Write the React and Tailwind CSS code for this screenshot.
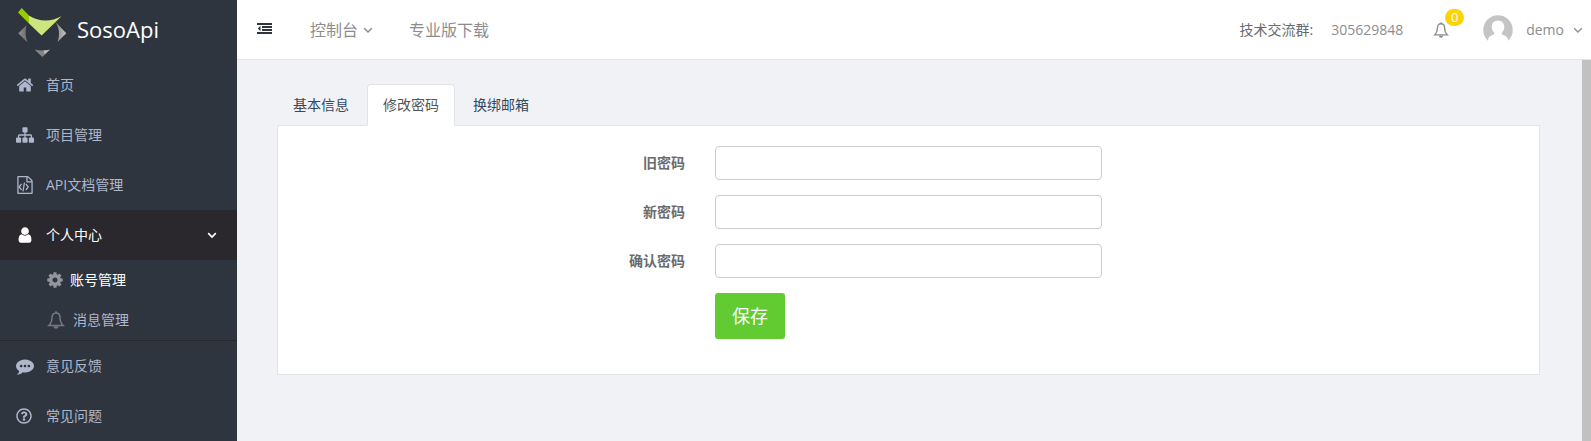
import React from "react";
import { FaRegQuestionCircle } from "react-icons/fa";

const PATHS = {
  home: "M1472 992v480q0 26-19 45t-45 19h-384v-384h-256v384h-384q-26 0-45-19t-19-45v-480q0-1 .5-3t.5-3l575-474 575 474q1 2 1 6zm223-69l-62 74q-8 9-21 11h-3q-13 0-21-7l-692-577-692 577q-12 8-24 7-13-2-21-11l-62-74q-8-10-7-23.5t11-21.5l719-599q32-26 76-26t76 26l244 204v-195q0-14 9-23t23-9h192q14 0 23 9t9 23v408l219 182q10 8 11 21.5t-7 23.5z",
  sitemap: "M1792 1248v320q0 40-28 68t-68 28h-320q-40 0-68-28t-28-68v-320q0-40 28-68t68-28h96v-192h-512v192h96q40 0 68 28t28 68v320q0 40-28 68t-68 28h-320q-40 0-68-28t-28-68v-320q0-40 28-68t68-28h96v-192h-512v192h96q40 0 68 28t28 68v320q0 40-28 68t-68 28h-320q-40 0-68-28t-28-68v-320q0-40 28-68t68-28h96v-192q0-52 38-90t90-38h512v-192h-96q-40 0-68-28t-28-68v-320q0-40 28-68t68-28h320q40 0 68 28t28 68v320q0 40-28 68t-68 28h-96v192h512q52 0 90 38t38 90v192h96q40 0 68 28t28 68z",
  code: "M1596 380q28 28 48 76t20 88v1152q0 40-28 68t-68 28h-1344q-40 0-68-28t-28-68v-1600q0-40 28-68t68-28h896q40 0 88 20t76 48zm-444-244v376h376q-10-29-22-41l-313-313q-12-12-41-22zm384 1528v-1024h-416q-40 0-68-28t-28-68v-416h-768v1536h1280zM480 768q8-11 21-12.5t24 6.5l51 38q11 8 12.5 21t-6.5 24l-182 243 182 243q8 11 6.5 24t-12.5 21l-51 38q-11 8-24 6.5t-21-12.5l-226-301q-14-19 0-38zm802 301q14 19 0 38l-226 301q-8 11-21 12.5t-24-6.5l-51-38q-11-8-12.5-21t6.5-24l182-243-182-243q-8-11-6.5-24t12.5-21l51-38q11-8 24-6.5t21 12.5zm-620 461q-13-2-20.5-13t-5.5-24l138-831q2-13 13-20.5t24-5.5l63 10q13 2 20.5 13t5.5 24l-138 831q-2 13-13 20.5t-24 5.5z",
  user: "M1536 1399q0 109-62.5 187t-150.5 78h-854q-88 0-150.5-78t-62.5-187q0-85 8.5-160.5t31.5-152 58.5-131 94-89 134.5-34.5q131 128 313 128t313-128q76 0 134.5 34.5t94 89 58.5 131 31.5 152 8.5 160.5zm-256-887q0 159-112.5 271.5t-271.5 112.5-271.5-112.5-112.5-271.5 112.5-271.5 271.5-112.5 271.5 112.5 112.5 271.5z",
  cog: "M1152 896q0-106-75-181t-181-75-181 75-75 181 75 181 181 75 181-75 75-181zm512-109v222q0 12-8 23t-20 13l-185 28q-19 54-39 91 35 50 107 138 10 12 10 25t-9 23q-27 37-99 108t-94 71q-12 0-26-9l-138-108q-44 23-91 38-16 136-29 186-7 28-36 28h-222q-14 0-24.5-8.5t-11.5-21.5l-28-184q-49-16-90-37l-141 107q-10 9-25 9-14 0-25-11-126-114-165-168-7-10-7-23 0-12 8-23 15-21 51-66.5t54-70.5q-27-50-41-99l-183-27q-13-2-21-12.5t-8-23.5v-222q0-12 8-23t19-13l186-28q14-46 39-92-40-57-107-138-10-12-10-24 0-10 9-23 26-36 98.5-107.5t94.5-71.5q13 0 26 10l138 107q44-23 91-38 16-136 29-186 7-28 36-28h222q14 0 24.5 8.5t11.5 21.5l28 184q49 16 90 37l142-107q9-9 24-9 13 0 25 10 129 119 165 170 7 8 7 22 0 12-8 23-15 21-51 66.5t-54 70.5q26 50 41 98l183 28q13 2 21 12.5t8 23.5z",
  comment: "M640 896q0-53-37.5-90.5t-90.5-37.5-90.5 37.5-37.5 90.5 37.5 90.5 90.5 37.5 90.5-37.5 37.5-90.5zm384 0q0-53-37.5-90.5t-90.5-37.5-90.5 37.5-37.5 90.5 37.5 90.5 90.5 37.5 90.5-37.5 37.5-90.5zm384 0q0-53-37.5-90.5t-90.5-37.5-90.5 37.5-37.5 90.5 37.5 90.5 90.5 37.5 90.5-37.5 37.5-90.5zm384 0q0 174-120 321.5t-326 233-450 85.5q-110 0-211-18-173 173-435 229-52 10-86 13-12 1-22-6t-13-18q-4-15 20-37 5-5 23.5-21.5t25.5-23.5 23.5-25.5 24-31.5 20.5-37 20-48 14.5-57.5 12.5-72.5q-146-90-229.5-216.5t-83.5-269.5q0-174 120-321.5t326-233 450-85.5 450 85.5 326 233 120 321.5z",
};

function Icon({ name, className }) {
  return (
    <svg viewBox="0 0 1792 1792" fill="currentColor" fillRule="evenodd" aria-hidden="true" className={`shrink-0 ${className}`}>
      <path d={PATHS[name]} />
    </svg>
  );
}

function Chevron({ className }) {
  return (
    <svg viewBox="0 0 10 10" fill="none" stroke="currentColor" aria-hidden="true" className={`shrink-0 ${className}`}>
      <path d="M1.2 3.2 5 7l3.8-3.8" />
    </svg>
  );
}

function Bell({ className }) {
  return (
    <svg viewBox="0 0 18 18" fill="none" stroke="currentColor" strokeWidth="1.5" aria-hidden="true" className={`shrink-0 ${className}`}>
      <path d="M9 2C6.4 2 5 4 5 6.5c0 4-.8 5.800-3.200 8h14.400C13.800 12.300 13 10.500 13 6.500 13 4 11.600 2 9 2z" />
      <path d="M9 2V.3" />
      <path d="M6.500 15.200h5c0 1.300-1.100 2.500-2.500 2.500s-2.500-1.200-2.500-2.500z" fill="currentColor" stroke="none" />
    </svg>
  );
}

function Logo() {
  return (
    <svg viewBox="0 0 49 54" aria-hidden="true" className="h-[54px] w-[49px] shrink-0">
      <defs>
        <linearGradient id="left" x1="0" x2="1">
          <stop offset="0" stopColor="#909090" />
          <stop offset="1" stopColor="#6c6c6c" />
        </linearGradient>
        <linearGradient id="right" x1="0" x2="1">
          <stop offset="0" stopColor="#858585" />
          <stop offset="1" stopColor="#c2c2c2" />
        </linearGradient>
      </defs>
      <path d="M8.500 22.200 0.300 30.300l9.200 9.200c-2.200-5.600-2.400-12-1-17.300z" fill="url(#left)" />
      <path d="M37 18.500 48.300 30.300 39.500 39c2.600-7 2-14.500-2.500-20.500z" fill="url(#right)" />
      <path d="M16.500 46.500c5 1.300 10.500 1.300 15.500 0L24.300 54z" fill="#858585" />
      <path d="M25.500 47.400c2.500 0 4.500-.3 6.500-.9l-5.300 5.100z" fill="#b8b8b8" />
      <path d="M3.700 5 0 9.500l11 11v-8z" fill="#99cc00" />
      <path d="M11 12.500c9.500 6 21 7 32.500 0.800L23.600 32.500 11 20.500z" fill="#cce57f" />
    </svg>
  );
}

function MenuItem({ icon, label, active }) {
  return (
    <a
      href="#"
      className={`flex h-[50px] items-center pl-4 pr-5 ${active ? "bg-[#2a272d] text-white" : "text-[#aeb7cb]"}`}
    >
      <span className="flex w-[30px]">{icon}</span>
      <span className="flex-1">{label}</span>
      {active && <Chevron className="size-[10px] stroke-[1.7]" />}
    </a>
  );
}

function Sidebar() {
  return (
    <aside className="w-[237px] shrink-0 bg-[#2f353f]">
      <a href="#" className="flex h-[60px] items-center gap-[10px] pl-[18px] text-[22px] text-white">
        <Logo />
        <span>SosoApi</span>
      </a>
      <nav>
        <MenuItem icon={<Icon name="home" className="size-[18px]" />} label="首页" />
        <MenuItem icon={<Icon name="sitemap" className="size-[18px]" />} label="项目管理" />
        <MenuItem icon={<Icon name="code" className="size-[18px]" />} label="API文档管理" />
        <MenuItem icon={<Icon name="user" className="size-[18px]" />} label="个人中心" active />
        <div className="border-b border-[#2a272d]">
          <a href="#" className="flex h-10 items-center gap-[6px] pl-[46px] text-white">
            <Icon name="cog" className="size-[18px] text-[#93979d]" />
            <span>账号管理</span>
          </a>
          <a href="#" className="flex h-10 items-center gap-2 pl-[47px] text-[#aeb7cb]">
            <Bell className="size-[18px] text-[#737983]" />
            <span>消息管理</span>
          </a>
        </div>
        <MenuItem icon={<Icon name="comment" className="size-[18px]" />} label="意见反馈" />
        <MenuItem icon={<FaRegQuestionCircle className="size-4" />} label="常见问题" />
      </nav>
    </aside>
  );
}

function Header() {
  return (
    <header className="flex h-[60px] items-center border-b border-[#e4e5e7] bg-white pl-5 pr-2 text-[#8d8d8d]">
      <button type="button" aria-label="收起菜单" className="text-[#2f353f]">
        <svg viewBox="0 0 15 11" fill="currentColor" aria-hidden="true" className="mb-[2px] h-[11px] w-[15px]">
          <path d="M0 0h15v2H0zM5 3h10v2H5zM5 6h10v2H5zM0 9h15v2H0zM3.500 2.800v5.400L.8 5.500z" />
        </svg>
      </button>
      <a href="#" className="ml-[38px] flex items-center gap-[5px] text-base">
        控制台
        <Chevron className="size-[10px] stroke-[1.5]" />
      </a>
      <a href="#" className="ml-9 text-base">专业版下载</a>
      <span className="ml-auto text-[#676a6c]">技术交流群:</span>
      <span className="ml-[18px]">305629848</span>
      <button type="button" aria-label="通知" className="relative ml-[30px]">
        <Bell className="size-4" />
        <span className="absolute -top-[13px] left-3 flex h-[17px] w-[19px] items-center justify-center rounded-full bg-[#ffd200] text-[13px] leading-none text-white">
          0
        </span>
      </button>
      <button type="button" className="ml-[34px] flex items-center">
        <svg viewBox="0 0 30 30" aria-hidden="true" className="mr-[13px] size-[30px]">
          <circle cx="15" cy="15" r="14.7" fill="#c4c4c4" />
          <path d="M15 5.500c4 0 6.300 3 6.300 6.300 0 2.600-1 4.600-2.500 5.900 0 1.500.6 2 2.700 2.700 2 .7 3.300 2.400 3.800 5.100L26 30H4l.7-4.500c.5-2.700 1.800-4.400 3.800-5.100 2.100-.7 2.700-1.200 2.700-2.700-1.500-1.300-2.500-3.300-2.500-5.900 0-3.300 2.300-6.300 6.300-6.300z" fill="#fff" />
        </svg>
        demo
        <Chevron className="ml-[9px] size-[10px] stroke-[1.3]" />
      </button>
    </header>
  );
}

function Tab({ label, active }) {
  return (
    <button
      type="button"
      role="tab"
      aria-selected={!!active}
      className={`-mb-px mr-[2px] h-[42px] rounded-t border px-[15px] ${
        active ? "border-[#e2e3e7] border-b-white bg-white text-[#555555]" : "border-transparent text-[#34495e]"
      }`}
    >
      {label}
    </button>
  );
}

function Field({ id, label }) {
  return (
    <div className="mb-[15px] grid grid-cols-3">
      <label htmlFor={id} className="flex items-center justify-end px-[15px] font-bold text-[#6a6c6f]">
        {label}
      </label>
      <div className="px-[15px]">
        <input
          id={id}
          type="password"
          className="block h-[34px] w-full rounded border border-[#cccccc] bg-white px-3 outline-none"
        />
      </div>
    </div>
  );
}

export default function App() {
  return (
    <div className="flex min-h-screen font-['Open_Sans','Noto_Sans_CJK_SC',sans-serif] text-sm">
      <Sidebar />
      <div className="flex min-w-0 flex-1 flex-col bg-[#f0f2f6]">
        <Header />
        <div className="flex flex-1">
          <main className="min-w-0 flex-1 pb-10 pl-10 pr-[42px] pt-6">
            <div role="tablist" className="flex">
              <Tab label="基本信息" />
              <Tab label="修改密码" active />
              <Tab label="换绑邮箱" />
            </div>
            <form className="border border-[#e2e3e7] bg-white px-[5px] py-5">
              <Field id="old" label="旧密码" />
              <Field id="new" label="新密码" />
              <Field id="confirm" label="确认密码" />
              <div className="mb-[15px] grid grid-cols-3">
                <div className="col-start-2 px-[15px]">
                  <button type="button" className="h-[46px] w-[70px] rounded-[3px] bg-[#62cb31] text-lg text-white">
                    保存
                  </button>
                </div>
              </div>
            </form>
          </main>
          <div className="w-[9px] bg-[#c1c1c1]" />
        </div>
      </div>
    </div>
  );
}
